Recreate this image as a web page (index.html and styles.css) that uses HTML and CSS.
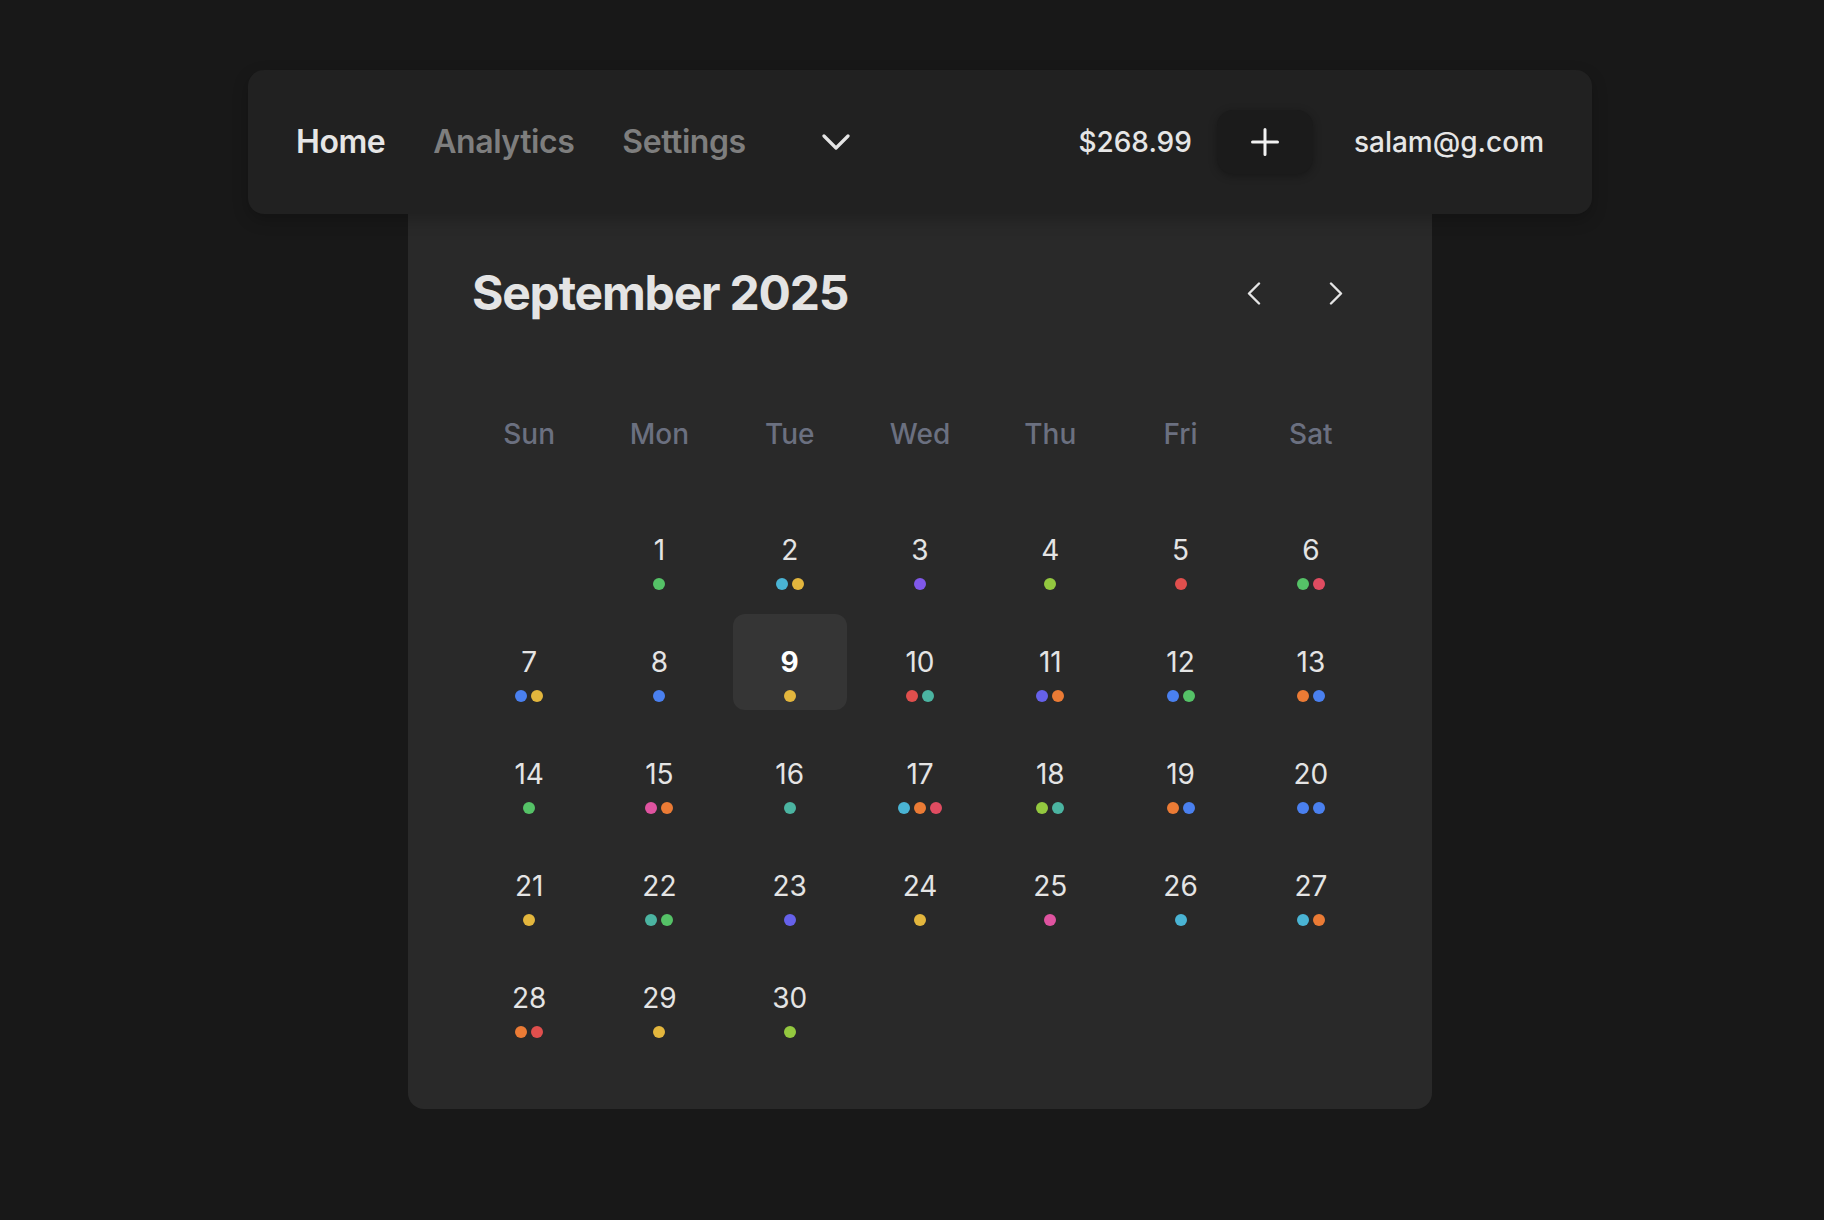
FILE: index.html
```html
<!DOCTYPE html>
<html lang="en">
<head>
<meta charset="utf-8">
<title>Calendar</title>
<link rel="stylesheet" href="styles.css">
</head>
<body>
<div class="page">
  <nav class="navbar">
    <div class="nav-left">
      <a class="nav-link active">Home</a>
      <a class="nav-link">Analytics</a>
      <a class="nav-link">Settings</a>
      <button class="icon-btn more" aria-label="More">
        <svg width="28" height="16" viewBox="0 0 28 16"><polyline points="2,2 14,14 26,2" fill="none" stroke="#e5e5e5" stroke-width="3.2" stroke-linecap="round" stroke-linejoin="round"/></svg>
      </button>
    </div>
    <div class="nav-right">
      <span class="balance">$268.99</span>
      <button class="add-btn" aria-label="Add">
        <svg width="28" height="28" viewBox="0 0 28 28"><path d="M14 1.5v25M1.5 14h25" fill="none" stroke="#f2f2f2" stroke-width="3" stroke-linecap="round"/></svg>
      </button>
      <span class="email">salam@g.com</span>
    </div>
  </nav>

  <section class="card">
    <header class="cal-header">
      <h1 class="cal-title">September 2025</h1>
      <div class="cal-nav">
        <button class="arrow-btn" aria-label="Previous month">
          <svg width="14" height="23" viewBox="0 0 14 23"><polyline points="12,1.5 2,11.5 12,21.5" fill="none" stroke="#e5e5e5" stroke-width="2.4" stroke-linecap="round" stroke-linejoin="round"/></svg>
        </button>
        <button class="arrow-btn" aria-label="Next month">
          <svg width="14" height="23" viewBox="0 0 14 23"><polyline points="2,1.5 12,11.5 2,21.5" fill="none" stroke="#e5e5e5" stroke-width="2.4" stroke-linecap="round" stroke-linejoin="round"/></svg>
        </button>
      </div>
    </header>

    <div class="weekdays">
      <span>Sun</span><span>Mon</span><span>Tue</span><span>Wed</span><span>Thu</span><span>Fri</span><span>Sat</span>
    </div>

    <div class="days">
      <div class="day empty"></div>
      <div class="day"><span class="num">1</span><span class="dots"><i class="d green"></i></span></div>
      <div class="day"><span class="num">2</span><span class="dots"><i class="d cyan"></i><i class="d yellow"></i></span></div>
      <div class="day"><span class="num">3</span><span class="dots"><i class="d purple"></i></span></div>
      <div class="day"><span class="num">4</span><span class="dots"><i class="d lime"></i></span></div>
      <div class="day"><span class="num">5</span><span class="dots"><i class="d red"></i></span></div>
      <div class="day"><span class="num">6</span><span class="dots"><i class="d green"></i><i class="d rose"></i></span></div>

      <div class="day"><span class="num">7</span><span class="dots"><i class="d blue"></i><i class="d yellow"></i></span></div>
      <div class="day"><span class="num">8</span><span class="dots"><i class="d blue"></i></span></div>
      <div class="day selected"><span class="num">9</span><span class="dots"><i class="d yellow"></i></span></div>
      <div class="day"><span class="num">10</span><span class="dots"><i class="d red"></i><i class="d teal"></i></span></div>
      <div class="day"><span class="num">11</span><span class="dots"><i class="d indigo"></i><i class="d orange"></i></span></div>
      <div class="day"><span class="num">12</span><span class="dots"><i class="d blue"></i><i class="d green"></i></span></div>
      <div class="day"><span class="num">13</span><span class="dots"><i class="d orange"></i><i class="d blue"></i></span></div>

      <div class="day"><span class="num">14</span><span class="dots"><i class="d green"></i></span></div>
      <div class="day"><span class="num">15</span><span class="dots"><i class="d pink"></i><i class="d orange"></i></span></div>
      <div class="day"><span class="num">16</span><span class="dots"><i class="d teal"></i></span></div>
      <div class="day"><span class="num">17</span><span class="dots"><i class="d cyan"></i><i class="d orange"></i><i class="d rose"></i></span></div>
      <div class="day"><span class="num">18</span><span class="dots"><i class="d lime"></i><i class="d teal"></i></span></div>
      <div class="day"><span class="num">19</span><span class="dots"><i class="d orange"></i><i class="d blue"></i></span></div>
      <div class="day"><span class="num">20</span><span class="dots"><i class="d blue"></i><i class="d blue"></i></span></div>

      <div class="day"><span class="num">21</span><span class="dots"><i class="d yellow"></i></span></div>
      <div class="day"><span class="num">22</span><span class="dots"><i class="d teal"></i><i class="d green"></i></span></div>
      <div class="day"><span class="num">23</span><span class="dots"><i class="d indigo"></i></span></div>
      <div class="day"><span class="num">24</span><span class="dots"><i class="d yellow"></i></span></div>
      <div class="day"><span class="num">25</span><span class="dots"><i class="d pink"></i></span></div>
      <div class="day"><span class="num">26</span><span class="dots"><i class="d cyan"></i></span></div>
      <div class="day"><span class="num">27</span><span class="dots"><i class="d cyan"></i><i class="d orange"></i></span></div>

      <div class="day"><span class="num">28</span><span class="dots"><i class="d orange"></i><i class="d red"></i></span></div>
      <div class="day"><span class="num">29</span><span class="dots"><i class="d yellow"></i></span></div>
      <div class="day"><span class="num">30</span><span class="dots"><i class="d lime"></i></span></div>
    </div>
  </section>
</div>
</body>
</html>
```

FILE: styles.css
```css
* { box-sizing: border-box; }

html, body {
  margin: 0;
  padding: 0;
  background: #181818;
  font-family: Inter, "Noto Sans", "Liberation Sans", sans-serif;
  color: #e5e5e5;
}

.page {
  width: 1824px;
  min-height: 1220px;
  padding: 70px 0 0 16px;
  display: flex;
  flex-direction: column;
  align-items: center;
}

button {
  font: inherit;
  border: 0;
  background: none;
  padding: 0;
  margin: 0;
  color: inherit;
  cursor: pointer;
}

/* Navbar */
.navbar {
  position: relative;
  z-index: 2;
  width: 1344px;
  height: 144px;
  padding: 0 48px;
  background: #212121;
  border-radius: 16px;
  box-shadow: 0 6px 16px rgba(0, 0, 0, 0.22);
  display: flex;
  align-items: center;
  justify-content: space-between;
}

.nav-left {
  display: flex;
  align-items: center;
  gap: 48px;
}

.nav-link {
  font-size: 32px;
  font-weight: 600;
  color: #7e7e7e;
  line-height: 40px;
  letter-spacing: -0.45px;
}

.nav-link.active { color: #e6e6e6; }

.icon-btn.more {
  margin-left: 28px;
  width: 28px;
  height: 40px;
  display: flex;
  align-items: center;
  justify-content: center;
}

.nav-right {
  display: flex;
  align-items: center;
}

.balance {
  font-size: 28px;
  font-weight: 500;
  color: #e6e6e6;
  line-height: 40px;
}

.add-btn {
  margin-left: 25px;
  width: 96px;
  height: 64px;
  border-radius: 16px;
  background: #1b1b1b;
  box-shadow: 0 2px 8px rgba(0, 0, 0, 0.3);
  display: flex;
  align-items: center;
  justify-content: center;
}

.email {
  margin-left: 41px;
  font-size: 28px;
  font-weight: 500;
  color: #e6e6e6;
  line-height: 40px;
}

/* Calendar card */
.card {
  position: relative;
  z-index: 1;
  width: 1024px;
  background: #292929;
  border-radius: 0 0 16px 16px;
  padding: 47px 64px 63px;
}

.cal-header {
  height: 64px;
  display: flex;
  align-items: center;
  justify-content: space-between;
}

.cal-title {
  margin: 0;
  font-size: 48px;
  font-weight: 700;
  letter-spacing: -1.2px;
  color: #e4e4e4;
  line-height: 64px;
}

.cal-nav {
  display: flex;
  align-items: center;
  gap: 18px;
}

.arrow-btn {
  width: 64px;
  height: 64px;
  display: flex;
  align-items: center;
  justify-content: center;
}

.weekdays {
  margin-top: 89px;
  display: grid;
  grid-template-columns: repeat(7, 1fr);
  column-gap: 16px;
  height: 40px;
}

.weekdays span {
  text-align: center;
  font-size: 28px;
  font-weight: 500;
  line-height: 40px;
  color: #6b7080;
}

.days {
  margin-top: 48px;
  display: grid;
  grid-template-columns: repeat(7, 1fr);
  grid-auto-rows: 96px;
  column-gap: 16px;
  row-gap: 16px;
}

.day {
  display: flex;
  flex-direction: column;
  align-items: center;
  padding-top: 32px;
  border-radius: 12px;
}

.day .num {
  font-size: 28px;
  line-height: 32px;
  font-weight: 400;
  color: #e4e4e4;
}

.day.selected { background: #353535; }

.day.selected .num {
  font-weight: 700;
  color: #ffffff;
}

.dots {
  margin-top: 12px;
  display: flex;
  gap: 4px;
  height: 12px;
}

.d {
  display: block;
  width: 12px;
  height: 12px;
  border-radius: 50%;
}

.green  { background: #55c267; }
.cyan   { background: #4ab4d4; }
.yellow { background: #e3b63d; }
.purple { background: #8058ea; }
.lime   { background: #93c83f; }
.red    { background: #e04f4d; }
.rose   { background: #e04c61; }
.blue   { background: #4a80ef; }
.teal   { background: #4bb4a1; }
.indigo { background: #6661ea; }
.orange { background: #eb7b35; }
.pink   { background: #df53a0; }
```
